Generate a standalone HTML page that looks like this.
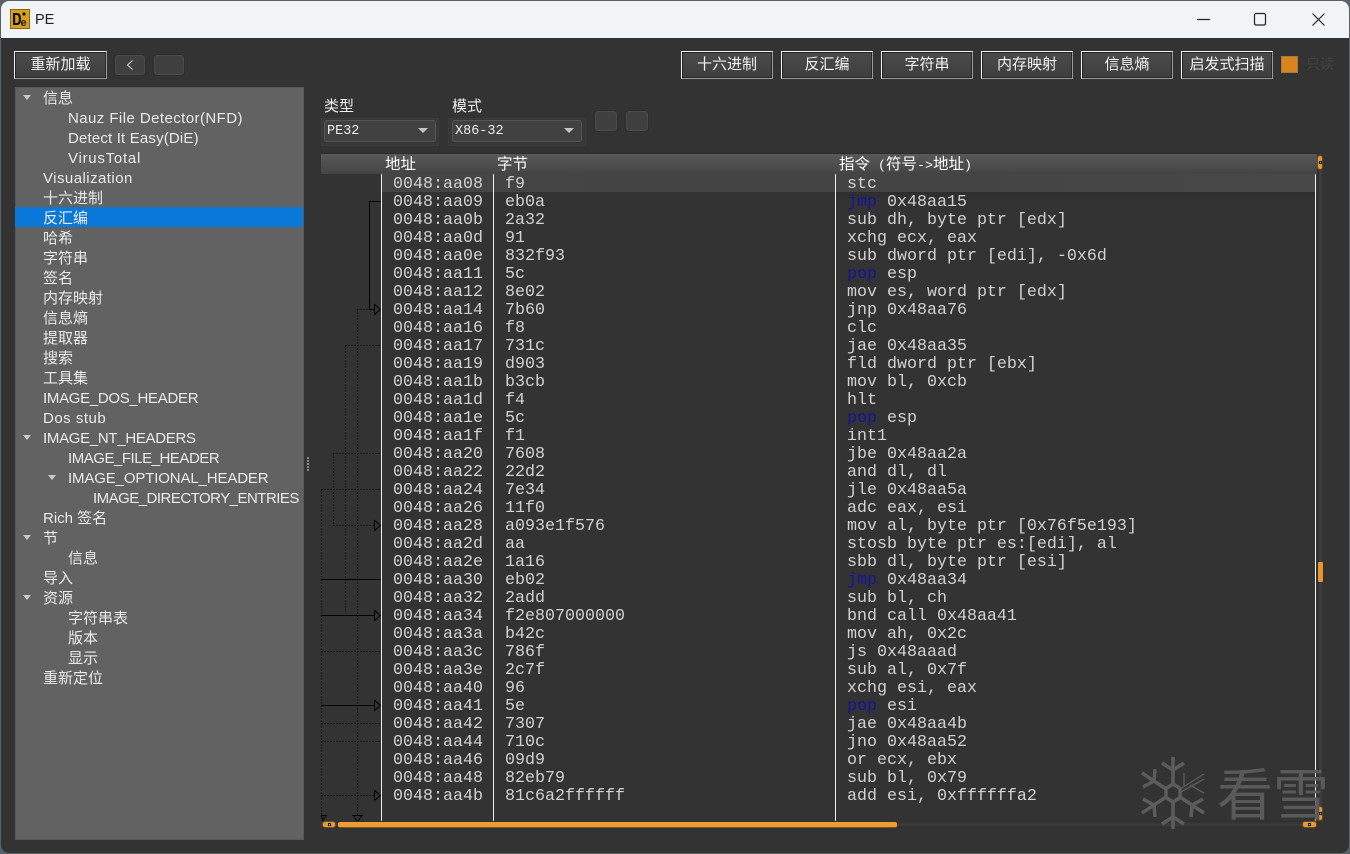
<!DOCTYPE html>
<html lang="zh"><head><meta charset="utf-8"><title>PE</title>
<style>
*{box-sizing:border-box}
html,body{margin:0;padding:0;width:1350px;height:854px;overflow:hidden;background:#5a6068}
body{position:relative;font-family:"Liberation Sans","Noto Sans CJK SC",sans-serif}
.a{position:absolute}
#win{position:absolute;left:1px;top:1px;width:1348px;height:852px;background:#333;border-radius:8px;overflow:hidden}
#tb{position:absolute;left:0;top:0;width:1348px;height:37px;background:#f0f4f7}
.btn{position:absolute;top:51px;height:28px;background:linear-gradient(#4b4b4b,#3e3e3e);border:1px solid;border-color:#f4f4f4 #9a9a9a #9a9a9a #f4f4f4;color:#f2f2f2;font-size:15px;line-height:26px;text-align:center;box-shadow:inset 1px 1px 0 #222,inset -1px -1px 0 #2a2a2a;white-space:nowrap}
.sb{position:absolute;top:55px;width:30px;height:20px;background:#404040;border:1px solid #4c4c4c;border-radius:3px;box-shadow:0 0 0 1px rgba(40,40,40,.5)}
.t{position:absolute;margin-top:2px;font-size:15px;line-height:20px;height:20px;color:#ebebeb;white-space:nowrap}
.tri{position:absolute;width:0;height:0;border-left:4.5px solid transparent;border-right:4.5px solid transparent;border-top:5px solid #c8c8c8}
.r{position:absolute;margin-top:2px;height:18px;line-height:18px;font-family:"Liberation Mono",monospace;font-size:16.67px;color:#d2d2d2;white-space:pre}
.r b{font-weight:normal;color:#14149a}
.h{position:absolute;top:155px;color:#fff;font-size:15.5px;line-height:19px;white-space:nowrap}
.h span{font-family:"Liberation Mono",monospace;font-size:13.33px}
.v{position:absolute;top:174px;height:647px;width:1px;background:#f0f0f0}
.cf{position:absolute;top:118px;height:28px;background:#373737;border:1px solid #3b3b3b}
.cb{position:absolute;top:120px;height:22px;background:#414141;border:1px solid #555;border-radius:3px;font-family:"Liberation Mono",monospace;font-size:13.5px;line-height:22px;color:#eee;padding-left:2px}
.ar{position:absolute;top:7px;right:7px;width:0;height:0;border-left:5px solid transparent;border-right:5px solid transparent;border-top:5px solid #c5c5c5}
.ob{position:absolute;background:#e29a3a;border:1px solid #6c4a1a;border-radius:3px}
.ob i{position:absolute;left:50%;top:50%;width:4px;height:4px;margin:-2px;background:#fff;border:1px solid #000}
.lb{position:absolute;top:98px;color:#eee;font-size:15px;line-height:18px}
</style></head><body>
<div id="win"></div>
<div id="tb" style="left:1px;top:1px;width:1348px;border-radius:8px 8px 0 0"></div>

<svg class="a" style="left:10px;top:9px" width="20" height="20" viewBox="0 0 20 20">
<rect x=".5" y=".5" width="19" height="19" fill="#d9a01e" stroke="#8a6414"/>
<path d="M3 4h4.500q3.500 0 3.500 6t-3.500 6H3z" fill="#111"/><path d="M5.200 6v8h1.600q2 0 2-4t-2-4z" fill="#d9a01e"/>
<circle cx="14" cy="5" r="1.600" fill="#111"/>
<text x="10.500" y="17" font-family="Liberation Sans" font-weight="bold" font-size="11" fill="#222">e</text>
</svg>
<div class="a" style="left:35px;top:11px;font-size:14.500px;line-height:18px;color:#222">PE</div>
<svg class="a" style="left:1190px;top:8px" width="150" height="24" viewBox="0 0 150 24" fill="none" stroke="#222" stroke-width="1.200">
<path d="M7 11.500h13"/><rect x="64.500" y="5.500" width="11" height="11.500" rx="1.600"/><path d="M122.500 5.500l12 12M134.500 5.500l-12 12"/>
</svg>

<div class="btn" style="left:14px;width:93px">重新加载</div>
<div class="sb" style="left:115px"><svg width="28" height="18" style="display:block"><path d="M16.500 4.500L11.500 9l5 4.500" fill="none" stroke="#ddd" stroke-width="1"/></svg></div>
<div class="sb" style="left:154px"></div>

<div class="btn" style="left:681px;width:92px">十六进制</div>
<div class="btn" style="left:781px;width:92px">反汇编</div>
<div class="btn" style="left:881px;width:92px">字符串</div>
<div class="btn" style="left:981px;width:92px">内存映射</div>
<div class="btn" style="left:1081px;width:92px">信息熵</div>
<div class="btn" style="left:1181px;width:92px">启发式扫描</div>
<div class="a" style="left:1281px;top:56px;width:17px;height:17px;background:#d9841c;border:1px solid #a87a40"></div>
<div class="a" style="left:1306px;top:55px;font-size:14px;line-height:18px;color:#424242">只读</div>

<!-- tree -->
<div class="a" style="left:15px;top:87px;width:289px;height:753px;background:#626262;border:1px solid #585858"></div>
<div class="a" style="left:15px;top:207px;width:288px;height:20px;background:#0a78d8"></div>
<div class="tri" style="left:23px;top:95px"></div>
<div class="tri" style="left:23px;top:435px"></div>
<div class="tri" style="left:48px;top:475px"></div>
<div class="tri" style="left:23px;top:535px"></div>
<div class="tri" style="left:23px;top:595px"></div>
<div class="t" style="left:43px;top:87px">信息</div>
<div class="t" style="left:68px;top:107px;letter-spacing:.43px">Nauz File Detector(NFD)</div>
<div class="t" style="left:68px;top:127px;letter-spacing:.17px">Detect It Easy(DiE)</div>
<div class="t" style="left:68px;top:147px;letter-spacing:.75px">VirusTotal</div>
<div class="t" style="left:43px;top:167px;letter-spacing:.45px">Visualization</div>
<div class="t" style="left:43px;top:187px">十六进制</div>
<div class="t" style="left:43px;top:207px">反汇编</div>
<div class="t" style="left:43px;top:227px">哈希</div>
<div class="t" style="left:43px;top:247px">字符串</div>
<div class="t" style="left:43px;top:267px">签名</div>
<div class="t" style="left:43px;top:287px">内存映射</div>
<div class="t" style="left:43px;top:307px">信息熵</div>
<div class="t" style="left:43px;top:327px">提取器</div>
<div class="t" style="left:43px;top:347px">搜索</div>
<div class="t" style="left:43px;top:367px">工具集</div>
<div class="t" style="left:43px;top:387px;letter-spacing:-.3px">IMAGE_DOS_HEADER</div>
<div class="t" style="left:43px;top:407px;letter-spacing:.5px">Dos stub</div>
<div class="t" style="left:43px;top:427px;letter-spacing:-.3px">IMAGE_NT_HEADERS</div>
<div class="t" style="left:68px;top:447px;letter-spacing:-.47px">IMAGE_FILE_HEADER</div>
<div class="t" style="left:68px;top:467px;letter-spacing:-.14px">IMAGE_OPTIONAL_HEADER</div>
<div class="t" style="left:93px;top:487px;letter-spacing:-.52px">IMAGE_DIRECTORY_ENTRIES</div>
<div class="t" style="left:43px;top:507px">Rich 签名</div>
<div class="t" style="left:43px;top:527px">节</div>
<div class="t" style="left:68px;top:547px">信息</div>
<div class="t" style="left:43px;top:567px">导入</div>
<div class="t" style="left:43px;top:587px">资源</div>
<div class="t" style="left:68px;top:607px">字符串表</div>
<div class="t" style="left:68px;top:627px">版本</div>
<div class="t" style="left:68px;top:647px">显示</div>
<div class="t" style="left:43px;top:667px">重新定位</div>

<svg class="a" style="left:306px;top:456px" width="5" height="18"><g fill="#8a8a8a"><rect x="1" y="1" width="2" height="2"/><rect x="1" y="4" width="2" height="2"/><rect x="1" y="7" width="2" height="2"/><rect x="1" y="10" width="2" height="2"/><rect x="1" y="13" width="2" height="2"/></g></svg>

<!-- combos -->
<div class="lb" style="left:324px">类型</div>
<div class="lb" style="left:452px">模式</div>
<div class="cf" style="left:321px;width:118px"></div>
<div class="cf" style="left:448px;width:138px"></div>
<div class="cb" style="left:324px;width:112px">PE32<span class="ar"></span></div>
<div class="cb" style="left:452px;width:130px">X86-32<span class="ar"></span></div>
<div class="sb" style="left:595px;top:111px;width:22px;height:20px"></div>
<div class="sb" style="left:626px;top:111px;width:22px;height:20px"></div>

<!-- table -->
<div class="a" style="left:321px;top:153px;width:996px;height:669px;background:#333"></div>
<div class="a" style="left:321px;top:153px;width:996px;height:21px;background:linear-gradient(#595959,#444);border-top:1px solid #2c2c2c"></div>
<div class="a" style="left:382px;top:174px;width:934px;height:18px;background:linear-gradient(90deg,#454545,#444 60%,#484848)"></div>
<div class="a" style="left:835px;top:192px;width:481px;height:10px;background:linear-gradient(#2d2d2d,#333)"></div>
<div class="h" style="left:385px">地址</div>
<div class="h" style="left:497px">字节</div>
<div class="h" style="left:839px">指令<span> (</span>符号<span>-&gt;</span>地址<span>)</span></div>

<div class="r" style="left:393px;top:174px">0048:aa08</div><div class="r" style="left:505px;top:174px">f9</div><div class="r" style="left:847px;top:174px">stc</div>
<div class="r" style="left:393px;top:192px">0048:aa09</div><div class="r" style="left:505px;top:192px">eb0a</div><div class="r" style="left:847px;top:192px"><b>jmp</b> 0x48aa15</div>
<div class="r" style="left:393px;top:210px">0048:aa0b</div><div class="r" style="left:505px;top:210px">2a32</div><div class="r" style="left:847px;top:210px">sub dh, byte ptr [edx]</div>
<div class="r" style="left:393px;top:228px">0048:aa0d</div><div class="r" style="left:505px;top:228px">91</div><div class="r" style="left:847px;top:228px">xchg ecx, eax</div>
<div class="r" style="left:393px;top:246px">0048:aa0e</div><div class="r" style="left:505px;top:246px">832f93</div><div class="r" style="left:847px;top:246px">sub dword ptr [edi], -0x6d</div>
<div class="r" style="left:393px;top:264px">0048:aa11</div><div class="r" style="left:505px;top:264px">5c</div><div class="r" style="left:847px;top:264px"><b>pop</b> esp</div>
<div class="r" style="left:393px;top:282px">0048:aa12</div><div class="r" style="left:505px;top:282px">8e02</div><div class="r" style="left:847px;top:282px">mov es, word ptr [edx]</div>
<div class="r" style="left:393px;top:300px">0048:aa14</div><div class="r" style="left:505px;top:300px">7b60</div><div class="r" style="left:847px;top:300px">jnp 0x48aa76</div>
<div class="r" style="left:393px;top:318px">0048:aa16</div><div class="r" style="left:505px;top:318px">f8</div><div class="r" style="left:847px;top:318px">clc</div>
<div class="r" style="left:393px;top:336px">0048:aa17</div><div class="r" style="left:505px;top:336px">731c</div><div class="r" style="left:847px;top:336px">jae 0x48aa35</div>
<div class="r" style="left:393px;top:354px">0048:aa19</div><div class="r" style="left:505px;top:354px">d903</div><div class="r" style="left:847px;top:354px">fld dword ptr [ebx]</div>
<div class="r" style="left:393px;top:372px">0048:aa1b</div><div class="r" style="left:505px;top:372px">b3cb</div><div class="r" style="left:847px;top:372px">mov bl, 0xcb</div>
<div class="r" style="left:393px;top:390px">0048:aa1d</div><div class="r" style="left:505px;top:390px">f4</div><div class="r" style="left:847px;top:390px">hlt</div>
<div class="r" style="left:393px;top:408px">0048:aa1e</div><div class="r" style="left:505px;top:408px">5c</div><div class="r" style="left:847px;top:408px"><b>pop</b> esp</div>
<div class="r" style="left:393px;top:426px">0048:aa1f</div><div class="r" style="left:505px;top:426px">f1</div><div class="r" style="left:847px;top:426px">int1</div>
<div class="r" style="left:393px;top:444px">0048:aa20</div><div class="r" style="left:505px;top:444px">7608</div><div class="r" style="left:847px;top:444px">jbe 0x48aa2a</div>
<div class="r" style="left:393px;top:462px">0048:aa22</div><div class="r" style="left:505px;top:462px">22d2</div><div class="r" style="left:847px;top:462px">and dl, dl</div>
<div class="r" style="left:393px;top:480px">0048:aa24</div><div class="r" style="left:505px;top:480px">7e34</div><div class="r" style="left:847px;top:480px">jle 0x48aa5a</div>
<div class="r" style="left:393px;top:498px">0048:aa26</div><div class="r" style="left:505px;top:498px">11f0</div><div class="r" style="left:847px;top:498px">adc eax, esi</div>
<div class="r" style="left:393px;top:516px">0048:aa28</div><div class="r" style="left:505px;top:516px">a093e1f576</div><div class="r" style="left:847px;top:516px">mov al, byte ptr [0x76f5e193]</div>
<div class="r" style="left:393px;top:534px">0048:aa2d</div><div class="r" style="left:505px;top:534px">aa</div><div class="r" style="left:847px;top:534px">stosb byte ptr es:[edi], al</div>
<div class="r" style="left:393px;top:552px">0048:aa2e</div><div class="r" style="left:505px;top:552px">1a16</div><div class="r" style="left:847px;top:552px">sbb dl, byte ptr [esi]</div>
<div class="r" style="left:393px;top:570px">0048:aa30</div><div class="r" style="left:505px;top:570px">eb02</div><div class="r" style="left:847px;top:570px"><b>jmp</b> 0x48aa34</div>
<div class="r" style="left:393px;top:588px">0048:aa32</div><div class="r" style="left:505px;top:588px">2add</div><div class="r" style="left:847px;top:588px">sub bl, ch</div>
<div class="r" style="left:393px;top:606px">0048:aa34</div><div class="r" style="left:505px;top:606px">f2e807000000</div><div class="r" style="left:847px;top:606px">bnd call 0x48aa41</div>
<div class="r" style="left:393px;top:624px">0048:aa3a</div><div class="r" style="left:505px;top:624px">b42c</div><div class="r" style="left:847px;top:624px">mov ah, 0x2c</div>
<div class="r" style="left:393px;top:642px">0048:aa3c</div><div class="r" style="left:505px;top:642px">786f</div><div class="r" style="left:847px;top:642px">js 0x48aaad</div>
<div class="r" style="left:393px;top:660px">0048:aa3e</div><div class="r" style="left:505px;top:660px">2c7f</div><div class="r" style="left:847px;top:660px">sub al, 0x7f</div>
<div class="r" style="left:393px;top:678px">0048:aa40</div><div class="r" style="left:505px;top:678px">96</div><div class="r" style="left:847px;top:678px">xchg esi, eax</div>
<div class="r" style="left:393px;top:696px">0048:aa41</div><div class="r" style="left:505px;top:696px">5e</div><div class="r" style="left:847px;top:696px"><b>pop</b> esi</div>
<div class="r" style="left:393px;top:714px">0048:aa42</div><div class="r" style="left:505px;top:714px">7307</div><div class="r" style="left:847px;top:714px">jae 0x48aa4b</div>
<div class="r" style="left:393px;top:732px">0048:aa44</div><div class="r" style="left:505px;top:732px">710c</div><div class="r" style="left:847px;top:732px">jno 0x48aa52</div>
<div class="r" style="left:393px;top:750px">0048:aa46</div><div class="r" style="left:505px;top:750px">09d9</div><div class="r" style="left:847px;top:750px">or ecx, ebx</div>
<div class="r" style="left:393px;top:768px">0048:aa48</div><div class="r" style="left:505px;top:768px">82eb79</div><div class="r" style="left:847px;top:768px">sub bl, 0x79</div>
<div class="r" style="left:393px;top:786px">0048:aa4b</div><div class="r" style="left:505px;top:786px">81c6a2ffffff</div><div class="r" style="left:847px;top:786px">add esi, 0xffffffa2</div>

<div class="v" style="left:381px"></div>
<div class="v" style="left:493px"></div>
<div class="v" style="left:835px"></div>
<div class="v" style="left:1315px"></div>

<!-- arrows -->
<svg class="a" style="left:321px;top:174px" width="61" height="648" viewBox="321 174 61 648" fill="none" stroke="#000" stroke-width="1" shape-rendering="crispEdges">
<g stroke-dasharray="1 2">
<path d="M357.500 309.500V815M357.500 309.500H370"/>
<path d="M345.500 345.500V613M345.500 345.500H380"/>
<path d="M333.500 453.500V525.500H374M333.500 453.500H380"/>
<path d="M321.500 489.500V815M321.500 489.500H380"/>
<path d="M321.500 651.500H380M321.500 723.500H380M321.500 741.500H380M321.500 795.500H374"/>
</g>
<path d="M381 201.500H369.500V309.500H381M321 579.500H381M321 615.500H381M321 705.500H381"/>
<g shape-rendering="auto" stroke-width="1">
<path d="M374.500 304.500v10l6-5z" fill="#333"/>
<path d="M374.500 520.500v10l6-5z"/><path d="M374.500 610.500v10l6-5z" fill="#333"/>
<path d="M374.500 700.500v10l6-5z" fill="#333"/><path d="M374.500 790.500v10l6-5z"/>
<path d="M353 815.500h9l-4.500 6z"/><path d="M321 815.500h5l-3 5z"/>
</g>
</svg>

<!-- scrollbars -->
<div class="a" style="left:1317px;top:154px;width:7px;height:667px;background:linear-gradient(90deg,#2f2f2f,#3e3e3e,#2f2f2f)"></div>
<div class="a" style="left:321px;top:821px;width:996px;height:7px;background:linear-gradient(#2e2e2e,#3c3c3c,#2e2e2e)"></div>
<div class="ob" style="left:1317px;top:155px;width:6px;height:15px"><i style="width:3px;height:3px;margin:-1.500px"></i></div>
<div class="ob" style="left:1317px;top:806px;width:6px;height:15px"><i style="width:3px;height:3px;margin:-1.500px"></i></div>
<div class="a" style="left:1318px;top:562px;width:5px;height:20px;background:#e6952c;border-radius:1px"></div>
<div class="ob" style="left:322px;top:821px;width:14px;height:7px"><i style="width:3px;height:3px;margin:-1.500px"></i></div>
<div class="ob" style="left:1302px;top:821px;width:15px;height:7px"><i style="width:3px;height:3px;margin:-1.500px"></i></div>
<div class="a" style="left:338px;top:822px;width:559px;height:6px;background:#ee9d33;border-radius:2px;border-bottom:1px solid #7a5018"></div>

<!-- watermark -->
<svg class="a" style="left:1140px;top:755px" width="70" height="76" viewBox="0 0 70 76" fill="none" stroke="#5c5c5c" stroke-width="3.500">
<path d="M33 2V30M33 46V74M33 15L22 8M33 15L44 8M33 62L22 69M33 62L44 69"/>
<path d="M2 18L26 34M14 26L15 14M14 26L3 32"/>
<path d="M2 58L26 42M14 50L15 62M14 50L3 44"/>
<path d="M40 42L64 58M52 50L63 44M52 50L51 62"/>
<path d="M33 29L40 33.500V42.500L33 47L26 42.500V33.500Z"/>
<path d="M40 34L64 19M41 37L64 24M44 18V31M50 30L64 38" stroke-width="1.300"/>
</svg>
<div class="a" style="left:1217px;top:754px;font-family:'Noto Sans CJK SC',sans-serif;font-size:56px;line-height:76px;color:#5a5a5a;white-space:nowrap">看雪</div>
</body></html>
